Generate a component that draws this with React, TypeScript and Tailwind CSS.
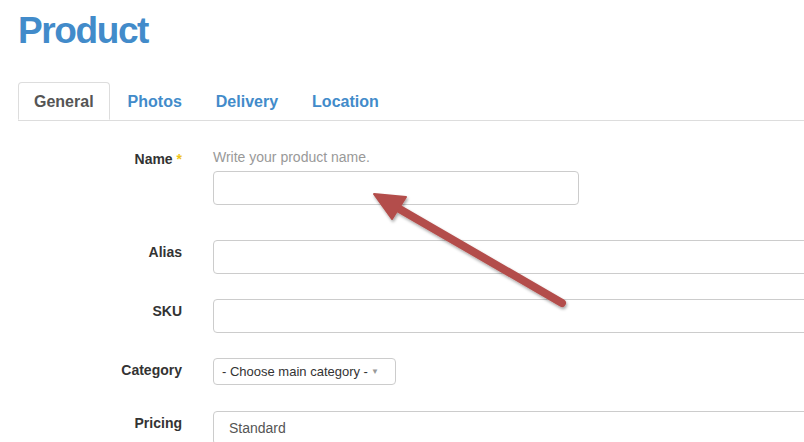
import React from "react";

const tabs = ["General", "Photos", "Delivery", "Location"];

const Label = ({ children }: { children: React.ReactNode }) => (
  <div className="w-[164px] shrink-0 text-right text-[14px] leading-5 font-bold text-[#333] pt-[2px]">
    {children}
  </div>
);

const Arrow = () => (
  <svg
    className="absolute left-0 top-0 pointer-events-none"
    width="804"
    height="442"
    viewBox="0 0 804 442"
  >
    <defs>
      <filter id="shadow" x="-20%" y="-20%" width="140%" height="140%">
        <feDropShadow dx="1" dy="2" stdDeviation="1.5" floodColor="#000" floodOpacity="0.35" />
      </filter>
    </defs>
    <g filter="url(#shadow)">
      <line
        x1="396"
        y1="207"
        x2="562"
        y2="303"
        stroke="#b34e4b"
        strokeWidth="8"
        strokeLinecap="round"
      />
      <polygon points="374,194 406,197 392,219" fill="#b34e4b" stroke="#b34e4b" strokeWidth="2" strokeLinejoin="round" />
    </g>
  </svg>
);

export default function App() {
  return (
    <div className="relative w-[804px] h-[442px] overflow-hidden bg-white font-['Liberation_Sans',Arial,sans-serif]">
      <div className="pl-[18px]">
        <h1 className="mt-[11px] text-[37px] leading-[40px] font-bold tracking-[-1.4px] text-[#428bca]">
          Product
        </h1>

        <ul className="mt-[31px] flex border-b border-[#ddd]">
          {tabs.map((t, i) => (
            <li key={t} className={i === 0 ? "-mb-px mr-[2px]" : "mr-[2px]"}>
              <span
                className={
                  i === 0
                    ? "block px-[15px] pt-[9px] pb-[7px] text-[16px] leading-5 font-bold text-[#555] bg-white border border-[#ddd] border-b-transparent rounded-t"
                    : "block px-[15px] pt-[9px] pb-[7px] text-[16px] leading-5 font-bold text-[#428bca] border border-transparent"
                }
              >
                {t}
              </span>
            </li>
          ))}
        </ul>

        <div className="mt-[26px] flex">
          <Label>
            Name <span className="text-[#f0c419]">*</span>
          </Label>
          <div className="ml-[31px]">
            <div className="text-[14px] leading-5 text-[#999]">Write your product name.</div>
            <div className="mt-[4px] w-[366px] h-[34px] border border-[#ccc] rounded" />
          </div>
        </div>

        <div className="mt-[35px] flex">
          <Label>Alias</Label>
          <div className="ml-[31px] shrink-0 w-[700px] h-[34px] border border-[#ccc] rounded" />
        </div>

        <div className="mt-[25px] flex">
          <Label>SKU</Label>
          <div className="ml-[31px] shrink-0 w-[700px] h-[34px] border border-[#ccc] rounded" />
        </div>

        <div className="mt-[25px] flex">
          <Label>Category</Label>
          <div className="ml-[31px] shrink-0 w-[183px] h-[27px] border border-[#ccc] rounded flex items-center justify-between pl-[8px] pr-[16px]">
            <span className="text-[13px] text-[#333]">- Choose main category -</span>
            <span className="text-[8px] text-[#999]">▼</span>
          </div>
        </div>

        <div className="mt-[26px] flex">
          <Label>Pricing</Label>
          <div className="ml-[31px] shrink-0 w-[700px] h-[34px] border border-[#ccc] rounded flex items-center pl-[15px]">
            <span className="text-[14px] text-[#555]">Standard</span>
          </div>
        </div>
      </div>
      <Arrow />
    </div>
  );
}
